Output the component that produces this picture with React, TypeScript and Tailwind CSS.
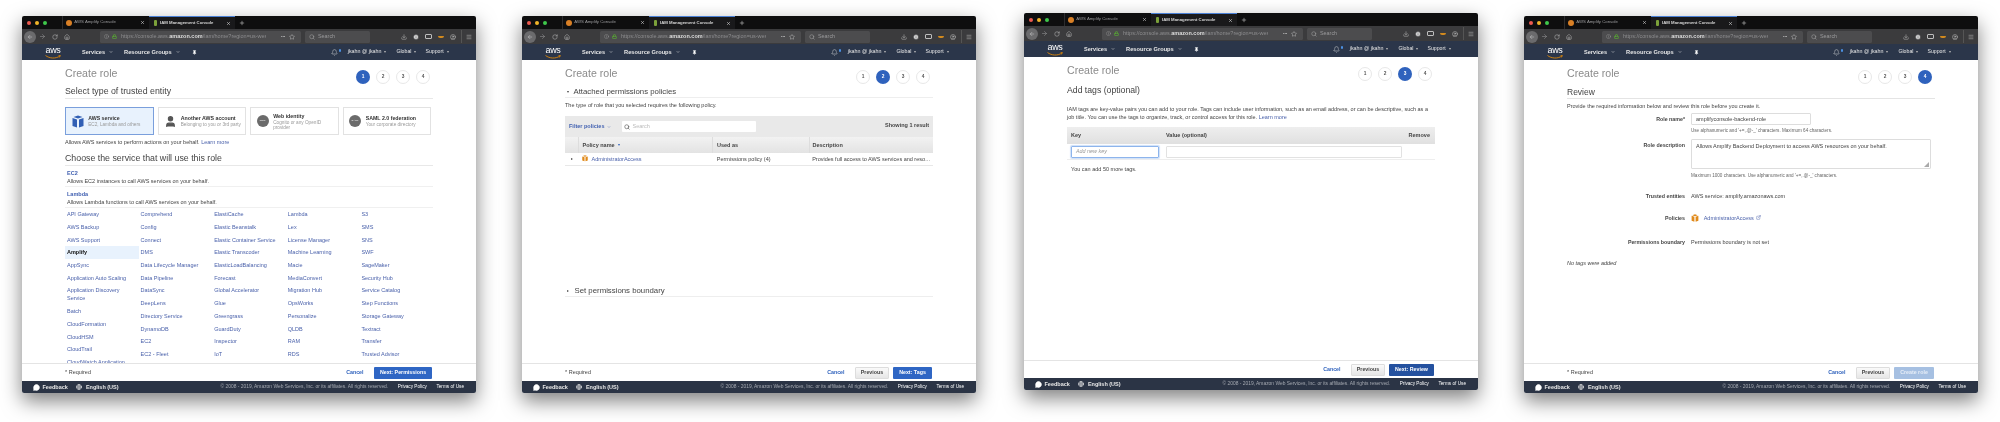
import type { ReactNode } from 'react'
import {
  ArrowLeft,
  ArrowRight,
  Bell,
  ChevronDown,
  Download,
  ExternalLink,
  Globe,
  Home,
  Info,
  Lock,
  Menu,
  MessageCircle,
  Pin,
  Plus,
  RotateCw,
  Search,
  Star,
  UserCircle,
  User,
  X,
} from 'lucide-react'

function Caret({ className = 'ml-[3px] text-[#bbb]' }: { className?: string }) {
  return <span className={`inline-block h-0 w-0 border-x-[1.5px] border-t-[2px] border-x-transparent border-t-current ${className}`} />
}

function AwsLogo() {
  return (
    <div className="relative flex h-[13px] w-[16px] flex-col items-center">
      <span className="text-[9px] leading-[9px] tracking-[-0.3px] text-white">aws</span>
      <svg viewBox="0 0 32 8" className="absolute bottom-0 h-[4px] w-[16px]">
        <path d="M1 1c8 6 20 7 29 1" fill="none" stroke="#f29100" strokeWidth="1.6" />
        <path d="M27 1l4 0-2 4" fill="none" stroke="#f29100" strokeWidth="1.2" />
      </svg>
    </div>
  )
}

function CubeIcon({ color = '#315fb5', className = 'h-[13px] w-[12px]' }: { color?: string; className?: string }) {
  return (
    <svg viewBox="0 0 24 26" className={className}>
      <path d="M12 1l9 3-9 3-9-3z" fill={color} />
      <path d="M1 6l9 3v16l-9-3z" fill={color} />
      <path d="M23 6l-9 3v16l9-3z" fill={color} />
    </svg>
  )
}

function BrowserBar() {
  return (
    <>
      {/* tabs */}
      <div className="flex h-[13px] shrink-0 items-stretch bg-[#0e0e0f]">
        <div className="flex w-[40px] items-center gap-[4px] pl-[5px]">
          <span className="size-[4px] rounded-full bg-[#ee5a50]" />
          <span className="size-[4px] rounded-full bg-[#f0b429]" />
          <span className="size-[4px] rounded-full bg-[#3ec84b]" />
        </div>
        <div className="flex w-[87px] items-center border-l border-[#2c2c2e] pl-[3px]">
          <span className="mr-[2.3px] size-[6px] rounded-full bg-[#d98026]" />
          <span className="text-[4.3px] text-[#9c9c9e]">AWS Amplify Console</span>
          <X className="ml-auto mr-[4.5px] size-[5px] text-[#ddd]" strokeWidth={2.5} />
        </div>
        <div className="flex w-[86px] items-center border-t border-[#4a80d6] bg-[#19191b] pl-[5px]">
          <span className="mr-[3px] h-[6px] w-[3px] rounded-[1px] bg-[#7ba13a]" />
          <span className="text-[4.3px] font-bold text-[#d6d6d6]">IAM Management Console</span>
          <X className="ml-auto mr-[4px] size-[5px] text-[#ddd]" strokeWidth={2.5} />
        </div>
        <div className="flex items-center pl-[4px]">
          <Plus className="size-[6px] text-[#ddd]" strokeWidth={2} />
        </div>
      </div>
      {/* toolbar */}
      <div className="flex h-[15px] shrink-0 items-center bg-[#3b3b3d] text-[#bdbdbd]">
        <div className="ml-[2px] flex size-[12px] items-center justify-center rounded-full bg-[#6b6b6d]">
          <ArrowLeft className="size-[6px] text-[#ccc]" strokeWidth={2} />
        </div>
        <ArrowRight className="ml-[3px] size-[7px] text-[#8f8f90]" strokeWidth={2} />
        <RotateCw className="ml-[6px] size-[6px]" strokeWidth={2} />
        <Home className="ml-[6px] size-[6px]" strokeWidth={2} />
        <div className="ml-[30px] flex h-[12px] w-[201px] items-center rounded-[1.5px] bg-[#4c4c4e] pl-[4px]">
          <Info className="size-[5px] text-[#999]" strokeWidth={2} />
          <Lock className="ml-[3px] size-[5px] text-[#5cb531]" strokeWidth={3} />
          <span className="ml-[4px] w-[145px] shrink-0 overflow-hidden text-[5.5px] whitespace-nowrap text-[#8d8d8f]">
            https://console.aws.<b className="text-[#dcdcdc]">amazon.com</b>/iam/home?region=us-wes
          </span>
          <span className="ml-[15px] text-[4px] leading-none">•••</span>
          <Star className="ml-[4px] size-[6px]" strokeWidth={2} />
        </div>
        <div className="ml-[4px] flex h-[12px] w-[65px] items-center rounded-[1.5px] bg-[#4c4c4e] pl-[4px]">
          <Search className="size-[6px] text-[#aaa]" strokeWidth={2} />
          <span className="ml-[3px] text-[5.4px] text-[#9a9a9c]">Search</span>
        </div>
        <Download className="ml-[31px] size-[6px]" strokeWidth={2} />
        <Info className="ml-[6px] size-[6px] fill-[#ddd] text-[#3b3b3d]" strokeWidth={2} />
        <div className="ml-[5.5px] h-[5px] w-[7px] rounded-[1px] border border-[#bdbdbd]" />
        <div className="ml-[6px] h-[2px] w-[6px] rounded-b-full bg-[#d28a1d]" />
        <UserCircle className="ml-[6px] size-[6px]" strokeWidth={2} />
        <div className="ml-[5px] h-[13px] w-px bg-[#555]" />
        <Menu className="ml-[4px] size-[6px]" strokeWidth={2} />
      </div>
      {/* aws nav */}
      <div className="flex h-[16px] shrink-0 items-center bg-[#2b364a] pl-[23px] text-[#e6e6e6]">
        <AwsLogo />
        <span className="ml-[21px] text-[5.6px] font-bold">Services</span>
        <ChevronDown className="ml-[4px] size-[4px]" strokeWidth={3} />
        <span className="ml-[11px] text-[5.7px] font-bold">Resource Groups</span>
        <ChevronDown className="ml-[4px] size-[4px]" strokeWidth={3} />
        <Pin className="ml-[12px] size-[5px] fill-white text-white" />
        <Bell className="ml-[134px] size-[7px]" strokeWidth={1.5} />
        <span className="mb-[3px] ml-[1px] size-[2.5px] rounded-full bg-[#4b90e2]" />
        <span className="ml-[6.5px] text-[5.3px]">jkahn @ jkahn</span>
        <Caret />
        <span className="ml-[10px] text-[5.2px]">Global</span>
        <Caret />
        <span className="ml-[9px] text-[5.2px]">Support</span>
        <Caret />
      </div>
    </>
  )
}

function Steps({ active }: { active: number }) {
  return (
    <div className="flex gap-[6px]">
      {[1, 2, 3, 4].map((n) => (
        <span
          key={n}
          className={`flex size-[14px] items-center justify-center rounded-full text-[4.8px] font-bold ${
            n === active ? 'bg-[#2f62bd] text-white' : 'border border-[#e8e8e8] text-[#555]'
          }`}
        >
          {n}
        </span>
      ))}
    </div>
  )
}

function Heading({ active }: { active: number }) {
  return (
    <div className="flex h-[26px] items-center justify-between pr-[3px] pt-[2px]">
      <h1 className="text-[10.6px] text-[#8b8b8b]">Create role</h1>
      <div className="mt-[6px]">
        <Steps active={active} />
      </div>
    </div>
  )
}

function ActionBar({ buttons, required }: { buttons: ReactNode; required: boolean }) {
  return (
    <div className="flex h-[18px] shrink-0 items-center justify-between border-t border-[#e4e4e4] pl-[43px] pr-[44px] text-[5.3px]">
      <span className="text-[5.5px] text-[#444]">{required ? '* Required' : ''}</span>
      <div className="flex items-center">{buttons}</div>
    </div>
  )
}

function BottomBar() {
  return (
    <div className="flex h-[12px] shrink-0 items-center bg-[#2b3445] pl-[10.5px] pr-[12px] text-[#e8e8e8]">
      <MessageCircle className="size-[7px] fill-white text-white" />
      <span className="ml-[3px] text-[5.5px] font-bold">Feedback</span>
      <Globe className="ml-[8px] size-[6px]" strokeWidth={2.5} />
      <span className="ml-[4px] text-[5.5px] font-bold">English (US)</span>
      <span className="ml-auto text-[4.9px] text-[#a5a9b1]">© 2008 - 2019, Amazon Web Services, Inc. or its affiliates. All rights reserved.</span>
      <span className="ml-[9.5px] text-[4.7px] text-white">Privacy Policy</span>
      <span className="ml-[9.5px] text-[4.7px] text-white">Terms of Use</span>
    </div>
  )
}

function Cancel() {
  return <span className="mr-[10.5px] font-bold text-[#2f62bd]">Cancel</span>
}

function Previous() {
  return (
    <span className="mr-[4px] flex h-[12px] w-[34px] items-center justify-center rounded-[1px] border border-[#ddd] bg-gradient-to-b from-[#fafafa] to-[#e6e6e6] font-bold text-[#444]">
      Previous
    </span>
  )
}

function Primary({ label, className }: { label: string; className: string }) {
  return <span className={`flex h-[12px] items-center justify-center rounded-[1px] font-bold ${className}`}>{label}</span>
}

function Window({
  active,
  buttons,
  children,
  className = 'mt-[16px]',
  required = true,
}: {
  active: number
  buttons: ReactNode
  children: ReactNode
  className?: string
  required?: boolean
}) {
  return (
    <div className={`flex h-[377px] w-[454px] shrink-0 flex-col overflow-hidden rounded-[2px] bg-white shadow-[0_8px_20px_rgba(0,0,0,0.5)] ${className}`}>
      <BrowserBar />
      <main className="min-h-0 flex-1 overflow-hidden pl-[43px] pr-[43px] text-[5.5px] text-[#444]">
        <Heading active={active} />
        {children}
      </main>
      <ActionBar buttons={buttons} required={required} />
      <BottomBar />
    </div>
  )
}

const trustCards = [
  { title: 'AWS service', sub: 'EC2, Lambda and others', icon: 'cube' },
  { title: 'Another AWS account', sub: 'Belonging to you or 3rd party', icon: 'user' },
  { title: 'Web identity', sub: 'Cognito or any OpenID provider', icon: 'www' },
  { title: 'SAML 2.0 federation', sub: 'Your corporate directory', icon: 'SAML' },
]

const services = [
  'API Gateway', 'AWS Backup', 'AWS Support', 'Amplify', 'AppSync', 'Application Auto Scaling', 'Application Discovery Service', 'Batch', 'CloudFormation', 'CloudHSM', 'CloudTrail', 'CloudWatch Application Insights',
  'Comprehend', 'Config', 'Connect', 'DMS', 'Data Lifecycle Manager', 'Data Pipeline', 'DataSync', 'DeepLens', 'Directory Service', 'DynamoDB', 'EC2', 'EC2 - Fleet',
  'ElastiCache', 'Elastic Beanstalk', 'Elastic Container Service', 'Elastic Transcoder', 'ElasticLoadBalancing', 'Forecast', 'Global Accelerator', 'Glue', 'Greengrass', 'GuardDuty', 'Inspector', 'IoT',
  'Lambda', 'Lex', 'License Manager', 'Machine Learning', 'Macie', 'MediaConvert', 'Migration Hub', 'OpsWorks', 'Personalize', 'QLDB', 'RAM', 'RDS',
  'S3', 'SMS', 'SNS', 'SWF', 'SageMaker', 'Security Hub', 'Service Catalog', 'Step Functions', 'Storage Gateway', 'Textract', 'Transfer', 'Trusted Advisor',
]

function ServiceColumn({ items }: { items: string[] }) {
  return (
    <div className="w-[73.7px]">
      {items.map((s) => (
        <div
          key={s}
          className={`px-[2px] py-[2.35px] text-[5.5px] leading-[8px] ${
            s === 'Amplify' ? 'bg-[#e8f2fd] font-bold text-[#111]' : 'text-[#4b62ab]'
          }`}
        >
          {s}
        </div>
      ))}
    </div>
  )
}

function StepOne() {
  const columns = [0, 1, 2, 3, 4].map((c) => services.slice(c * 12, c * 12 + 12))
  return (
    <>
      <h2 className="flex h-[13px] items-center border-b border-[#e8e8e8] text-[8.8px] text-[#444]">Select type of trusted entity</h2>
      <div className="mt-[8px] flex gap-[4px]">
        {trustCards.map((c, i) => (
          <div
            key={c.title}
            className={`flex h-[28px] w-[88.5px] items-center border-[1.5px] pl-[5.5px] ${
              i === 0 ? 'border-[#7a9fdc] bg-[#e8f2fd]' : 'border-[#e2e2e2] bg-white'
            }`}
          >
            <div className="flex w-[16.7px] shrink-0">
              {c.icon === 'cube' && <CubeIcon />}
              {c.icon === 'user' && <User className="size-[13px] fill-[#555] text-[#555]" />}
              {(c.icon === 'www' || c.icon === 'SAML') && (
                <span className="flex size-[12px] items-center justify-center rounded-full bg-[#6b6b6b] text-[2.5px] text-white">{c.icon}</span>
              )}
            </div>
            <div className="min-w-0">
              <div className="text-[5.25px] font-bold leading-[7px] text-[#333]">{c.title}</div>
              <div className="text-[4.7px] leading-[5px] text-[#999]">{c.sub}</div>
            </div>
          </div>
        ))}
      </div>
      <p className="mt-[3px] leading-[9px]">
        Allows AWS services to perform actions on your behalf. <span className="text-[#4b62ab]">Learn more</span>
      </p>
      <h2 className="mt-[5px] flex h-[14px] items-center border-b border-[#e8e8e8] text-[8.8px] text-[#444]">Choose the service that will use this role</h2>
      {[
        ['EC2', 'Allows EC2 instances to call AWS services on your behalf.'],
        ['Lambda', 'Allows Lambda functions to call AWS services on your behalf.'],
      ].map(([name, text]) => (
        <div key={name} className="h-[21px] border-b border-[#f0f0f0] pl-[2px] pt-[3px] leading-[8px]">
          <div className="font-bold text-[#3f5fb0]">{name}</div>
          <div>{text}</div>
        </div>
      ))}
      <div className="flex">
        {columns.map((items) => (
          <ServiceColumn key={items[0]} items={items} />
        ))}
      </div>
    </>
  )
}

function SectionTitle({ open, title }: { open?: boolean; title: string }) {
  return (
    <div className="flex h-[12px] items-center border-b border-[#eee] pl-[2px] text-[7.8px] text-[#444]">
      <span
        className={
          open
            ? 'mr-[4.5px] h-0 w-0 border-x-[1.5px] border-t-[2px] border-x-transparent border-t-[#444]'
            : 'mr-[5.5px] h-0 w-0 border-y-[1.5px] border-l-[2px] border-y-transparent border-l-[#444]'
        }
      />
      {title}
    </div>
  )
}

function StepTwo() {
  return (
    <>
      <SectionTitle open title="Attached permissions policies" />
      <p className="mt-[3px] leading-[9px]">The type of role that you selected requires the following policy.</p>
      <div className="mt-[6px] flex h-[21px] items-center bg-[#e9e9e9] px-[4px]">
        <span className="flex items-center text-[#3f5fb0]">
          <b>Filter policies</b>
          <ChevronDown className="ml-[3px] size-[4px]" strokeWidth={2} />
        </span>
        <div className="ml-[11px] flex h-[11px] w-[134px] items-center rounded-[1px] bg-white pl-[2px] text-[#bbb]">
          <Search className="size-[6px] text-[#555]" strokeWidth={2.5} />
          <span className="ml-[2px]">Search</span>
        </div>
        <b className="mb-[3px] ml-auto">Showing 1 result</b>
      </div>
      <div className="flex h-[16px] items-center bg-gradient-to-b from-[#f2f2f2] to-[#e3e3e3] font-bold">
        <span className="h-full w-[13.5px] border-r border-[#ddd]" />
        <span className="flex h-full w-[134.5px] items-center border-r border-[#ddd] pl-[4px]">
          Policy name
          <Caret className="ml-[3.5px] text-[#2f62bd]" />
        </span>
        <span className="flex h-full w-[96.5px] items-center border-r border-[#ddd] pl-[4px]">Used as</span>
        <span className="pl-[3px]">Description</span>
      </div>
      <div className="flex h-[12.5px] items-center border-b border-[#e8e8e8]">
        <span className="flex w-[13.5px] justify-center">
          <span className="h-0 w-0 border-y-[1.5px] border-l-[2px] border-y-transparent border-l-[#444]" />
        </span>
        <span className="flex w-[134.5px] items-center pl-[4px]">
          <CubeIcon color="#e08a1b" className="mb-[1px] h-[6.5px] w-[6px]" />
          <span className="ml-[3px] text-[#4b62ab]">AdministratorAccess</span>
        </span>
        <span className="w-[96.5px] pl-[4px]">Permissions policy (4)</span>
        <span className="w-[124px] truncate pl-[3px] pr-[1px]">Provides full access to AWS services and resources.</span>
      </div>
      <div className="mt-[119.5px]">
        <SectionTitle title="Set permissions boundary" />
      </div>
    </>
  )
}

function StepThree() {
  return (
    <>
      <h2 className="flex h-[16px] items-center text-[8.7px] text-[#444]">Add tags (optional)</h2>
      <p className="mt-[6px] leading-[8px] text-[5.5px]">
        IAM tags are key-value pairs you can add to your role. Tags can include user information, such as an email address, or can be descriptive, such as a job title. You can use the tags to organize, track, or control access for this role. <span className="text-[#4b62ab]">Learn more</span>
      </p>
      <div className="mt-[6px] flex h-[17px] items-center bg-gradient-to-b from-[#eeeeee] to-[#e0e0e0] pl-[4px] pr-[5px] font-bold">
        <span className="w-[95px]">Key</span>
        <span>Value (optional)</span>
        <span className="ml-auto">Remove</span>
      </div>
      <div className="flex h-[16px] items-center gap-[7px] border-b border-[#eee] pl-[4px]">
        <div className="flex h-[12px] w-[88px] items-center rounded-[1px] border border-[#8db4ec] pl-[4px] text-[5.4px] italic text-[#999] shadow-[0_0_1px_1px_#cfe0f8]">Add new key</div>
        <div className="h-[12px] w-[236px] rounded-[1px] border border-[#e2e2e2]" />
      </div>
      <p className="mt-[5px] pl-[4px]">You can add 50 more tags.</p>
    </>
  )
}

function FormRow({ label, children, className }: { label: string; children: ReactNode; className: string }) {
  return (
    <div className={`flex items-start ${className}`}>
      <b className="w-[124px] shrink-0 pr-[6px] text-right text-[5.3px] leading-[12px] text-[#444]">{label}</b>
      <div className="min-w-0 flex-1 leading-[12px]">{children}</div>
    </div>
  )
}

function StepFour() {
  return (
    <>
      <h2 className="flex h-[13px] items-center border-b border-[#e4e4e4] text-[8.5px] text-[#444]">Review</h2>
      <p className="mt-[3px] leading-[8px]">Provide the required information below and review this role before you create it.</p>
      <FormRow label="Role name*" className="mt-[3px]">
        <div className="flex h-[12px] w-[120px] items-center rounded-[1px] border border-[#ddd] pl-[4px]">amplifyconsole-backend-role</div>
        <div className="mt-[3px] text-[4.6px] leading-[6px] text-[#666]">Use alphanumeric and '+=,.@-_' characters. Maximum 64 characters.</div>
      </FormRow>
      <FormRow label="Role description" className="mt-[5px]">
        <div className="relative h-[30px] w-[240px] rounded-[1px] border border-[#ddd] pl-[4px] pt-[2px] leading-[8px]">
          Allows Amplify Backend Deployment to access AWS resources on your behalf.
          <span className="absolute bottom-[1px] right-[1px] h-0 w-0 border-b-[5px] border-l-[5px] border-b-[#aaa] border-l-transparent" />
        </div>
        <div className="mt-[4px] text-[4.6px] leading-[6px] text-[#666]">Maximum 1000 characters. Use alphanumeric and '+=,.@-_' characters.</div>
      </FormRow>
      <FormRow label="Trusted entities" className="mt-[10.5px]">
        AWS service: amplify.amazonaws.com
      </FormRow>
      <FormRow label="Policies" className="mt-[10px]">
        <span className="flex h-[12px] items-center text-[#4b62ab]">
          <CubeIcon color="#e08a1b" className="mr-[4.7px] h-[8px] w-[8px]" />
          AdministratorAccess
          <ExternalLink className="ml-[2px] size-[5px]" strokeWidth={2} />
        </span>
      </FormRow>
      <FormRow label="Permissions boundary" className="mt-[12px]">
        Permissions boundary is not set
      </FormRow>
      <p className="mt-[11px] leading-[8px] italic">No tags were added</p>
    </>
  )
}

export default function App() {
  return (
    <div className="flex h-[422px] w-[2000px] items-start overflow-hidden bg-white pl-[22px] font-['Liberation_Sans',Arial,sans-serif] blur-[0.45px]">
      <Window
        active={1}
        buttons={
          <>
            <Cancel />
            <Primary label="Next: Permissions" className="w-[58px] bg-[#2f66c4] text-white" />
          </>
        }
      >
        <StepOne />
      </Window>
      <Window
        active={2}
        className="ml-[46px] mt-[16px]"
        buttons={
          <>
            <Cancel />
            <Previous />
            <Primary label="Next: Tags" className="w-[39px] bg-[#2f66c4] text-white" />
          </>
        }
      >
        <StepTwo />
      </Window>
      <Window
        active={3}
        className="ml-[48px] mt-[13px]"
        required={false}
        buttons={
          <>
            <Cancel />
            <Previous />
            <Primary label="Next: Review" className="w-[45px] bg-[#24519f] text-white" />
          </>
        }
      >
        <StepThree />
      </Window>
      <Window
        active={4}
        className="ml-[46px] mt-[16px]"
        buttons={
          <>
            <Cancel />
            <Previous />
            <Primary label="Create role" className="w-[40px] bg-[#a6c0e2] text-[#e6edf7]" />
          </>
        }
      >
        <StepFour />
      </Window>
    </div>
  )
}
